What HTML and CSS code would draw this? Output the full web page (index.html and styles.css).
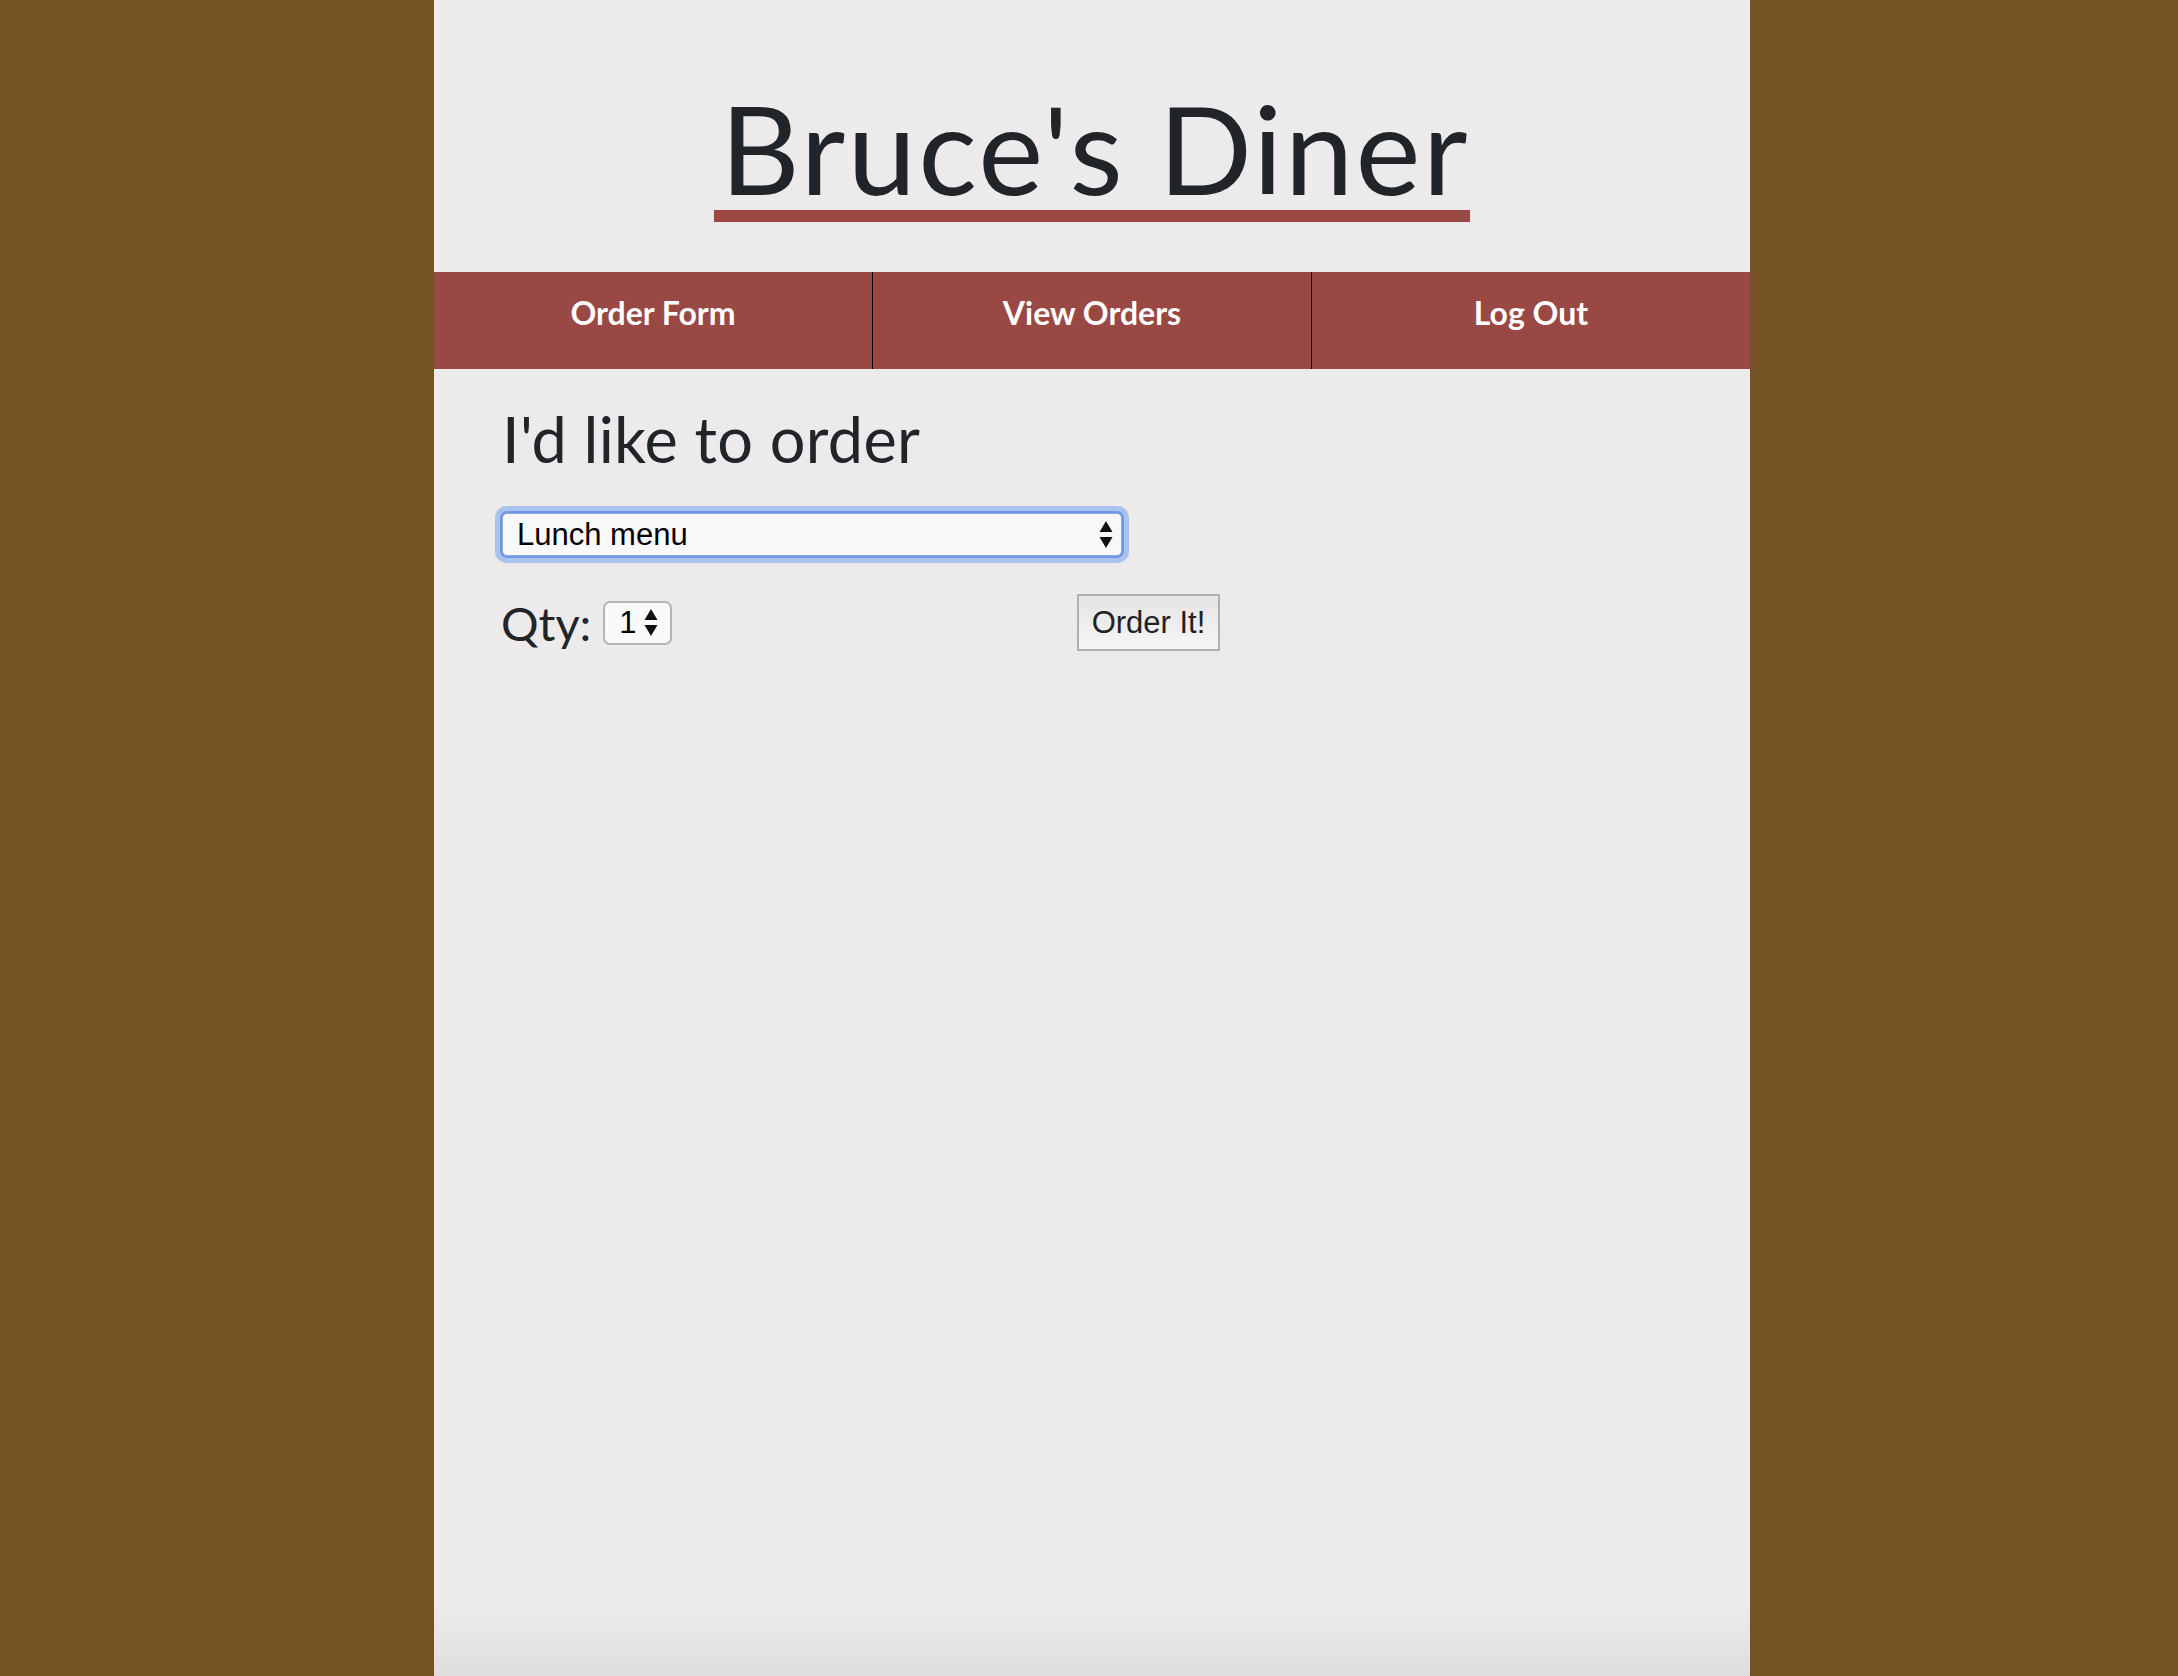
FILE: index.html
```html
<!DOCTYPE html>
<html lang="en">
<head>
<meta charset="utf-8">
<title>Bruce's Diner</title>
<link rel="stylesheet" href="styles.css">
</head>
<body>
<div class="page">
  <header class="masthead">
    <h1 class="brand">Bruce's Diner</h1>
  </header>
  <nav class="nav">
    <a class="nav-item" href="#">Order Form</a>
    <a class="nav-item" href="#">View Orders</a>
    <a class="nav-item" href="#">Log Out</a>
  </nav>
  <main class="content">
    <h2 class="lead">I'd like to order</h2>
    <div class="select-wrap">
      <select class="menu-select">
        <option>Lunch menu</option>
        <option>Breakfast menu</option>
        <option>Dinner menu</option>
      </select>
      <svg class="select-arrows" width="14" height="30" viewBox="0 0 14 30"><path d="M7 1 L13.5 12 L0.5 12 Z M0.5 17 L13.5 17 L7 28 Z" fill="#111"/></svg>
    </div>
    <div class="order-row">
      <label class="qty">Qty:
        <span class="qty-box"><span class="qty-num">1</span><svg class="qty-arrows" width="14" height="30" viewBox="0 0 14 30"><path d="M7 1 L13.5 12 L0.5 12 Z M0.5 17 L13.5 17 L7 28 Z" fill="#111"/></svg></span>
      </label>
      <button class="order-btn" type="button">Order It!</button>
    </div>
  </main>
</div>
</body>
</html>
```
FILE: styles.css
```css
html, body {
  margin: 0;
  padding: 0;
}
body {
  background: #745224;
  color: #212529;
  font-family: "Lato", "Noto Sans", sans-serif;
  padding-left: 6px;
}
.page {
  width: 1316px;
  min-height: 1676px;
  margin: 0 auto;
  background: linear-gradient(to bottom, #eceaeb 0, #eceaeb calc(100% - 70px), #dfdddd 100%);
  display: flex;
  flex-direction: column;
}
.masthead {
  height: 272px;
  display: flex;
  justify-content: center;
  align-items: flex-start;
}
.brand {
  margin: 86px 0 0;
  font-family: "Lato", sans-serif;
  font-weight: 400;
  font-size: 123px;
  line-height: 124px;
  letter-spacing: 2.2px;
  padding: 0 0 0 6px;
  border-bottom: 12px solid #9a4844;
  display: inline-block;
  color: #212529;
}
.nav {
  display: flex;
  height: 97px;
  background: #9a4844;
}
.nav-item {
  flex: 1;
  display: flex;
  justify-content: center;
  padding-top: 21px;
  color: #fff;
  text-decoration: none;
  font-family: "Lato", sans-serif;
  font-weight: 700;
  font-size: 32px;
}
.nav-item + .nav-item {
  border-left: 1px solid #000;
}
.content {
  padding: 30px 0 0 67px;
  display: flex;
  flex-direction: column;
  align-items: flex-start;
}
.lead {
  margin: 0;
  font-weight: 400;
  font-size: 63px;
  line-height: 80px;
  letter-spacing: 0.3px;
  padding-left: 1px;
}
.select-wrap {
  position: relative;
  margin-top: 34px;
  margin-left: 1px;
}
.menu-select {
  appearance: none;
  -webkit-appearance: none;
  display: block;
  width: 620px;
  height: 43px;
  border: 1px solid #8fa9d9;
  border-radius: 5px;
  background: #f8f8f8;
  box-shadow: 0 0 0 2px #6f98e4, 0 0 0 7px #a9c2ee;
  font-family: "Liberation Sans", Arial, sans-serif;
  font-size: 31px;
  color: #000;
  padding: 0 0 0 14px;
  outline: none;
}
.select-arrows {
  position: absolute;
  right: 9px;
  top: 7px;
}
.order-row {
  margin-top: 38px;
  width: 719px;
  display: flex;
  justify-content: space-between;
  align-items: flex-start;
}
.qty {
  display: flex;
  align-items: center;
  gap: 12px;
  font-size: 47px;
  line-height: 50px;
  margin-top: 4px;
}
.qty-box {
  display: inline-flex;
  align-items: center;
  width: 69px;
  height: 44px;
  box-sizing: border-box;
  border: 2px solid #b4b4b4;
  border-radius: 7px;
  background: #fafafa;
  padding-left: 14px;
  gap: 7px;
}
.qty-num {
  font-family: "Liberation Sans", Arial, sans-serif;
  font-size: 31px;
  color: #000;
}
.order-btn {
  width: 143px;
  height: 57px;
  border: 2px solid #b0b0b0;
  border-radius: 0;
  background: linear-gradient(to bottom, #e4e4e4, #f6f6f6);
  font-family: "Liberation Sans", Arial, sans-serif;
  font-size: 31px;
  color: #222;
  padding: 0;
}
```
